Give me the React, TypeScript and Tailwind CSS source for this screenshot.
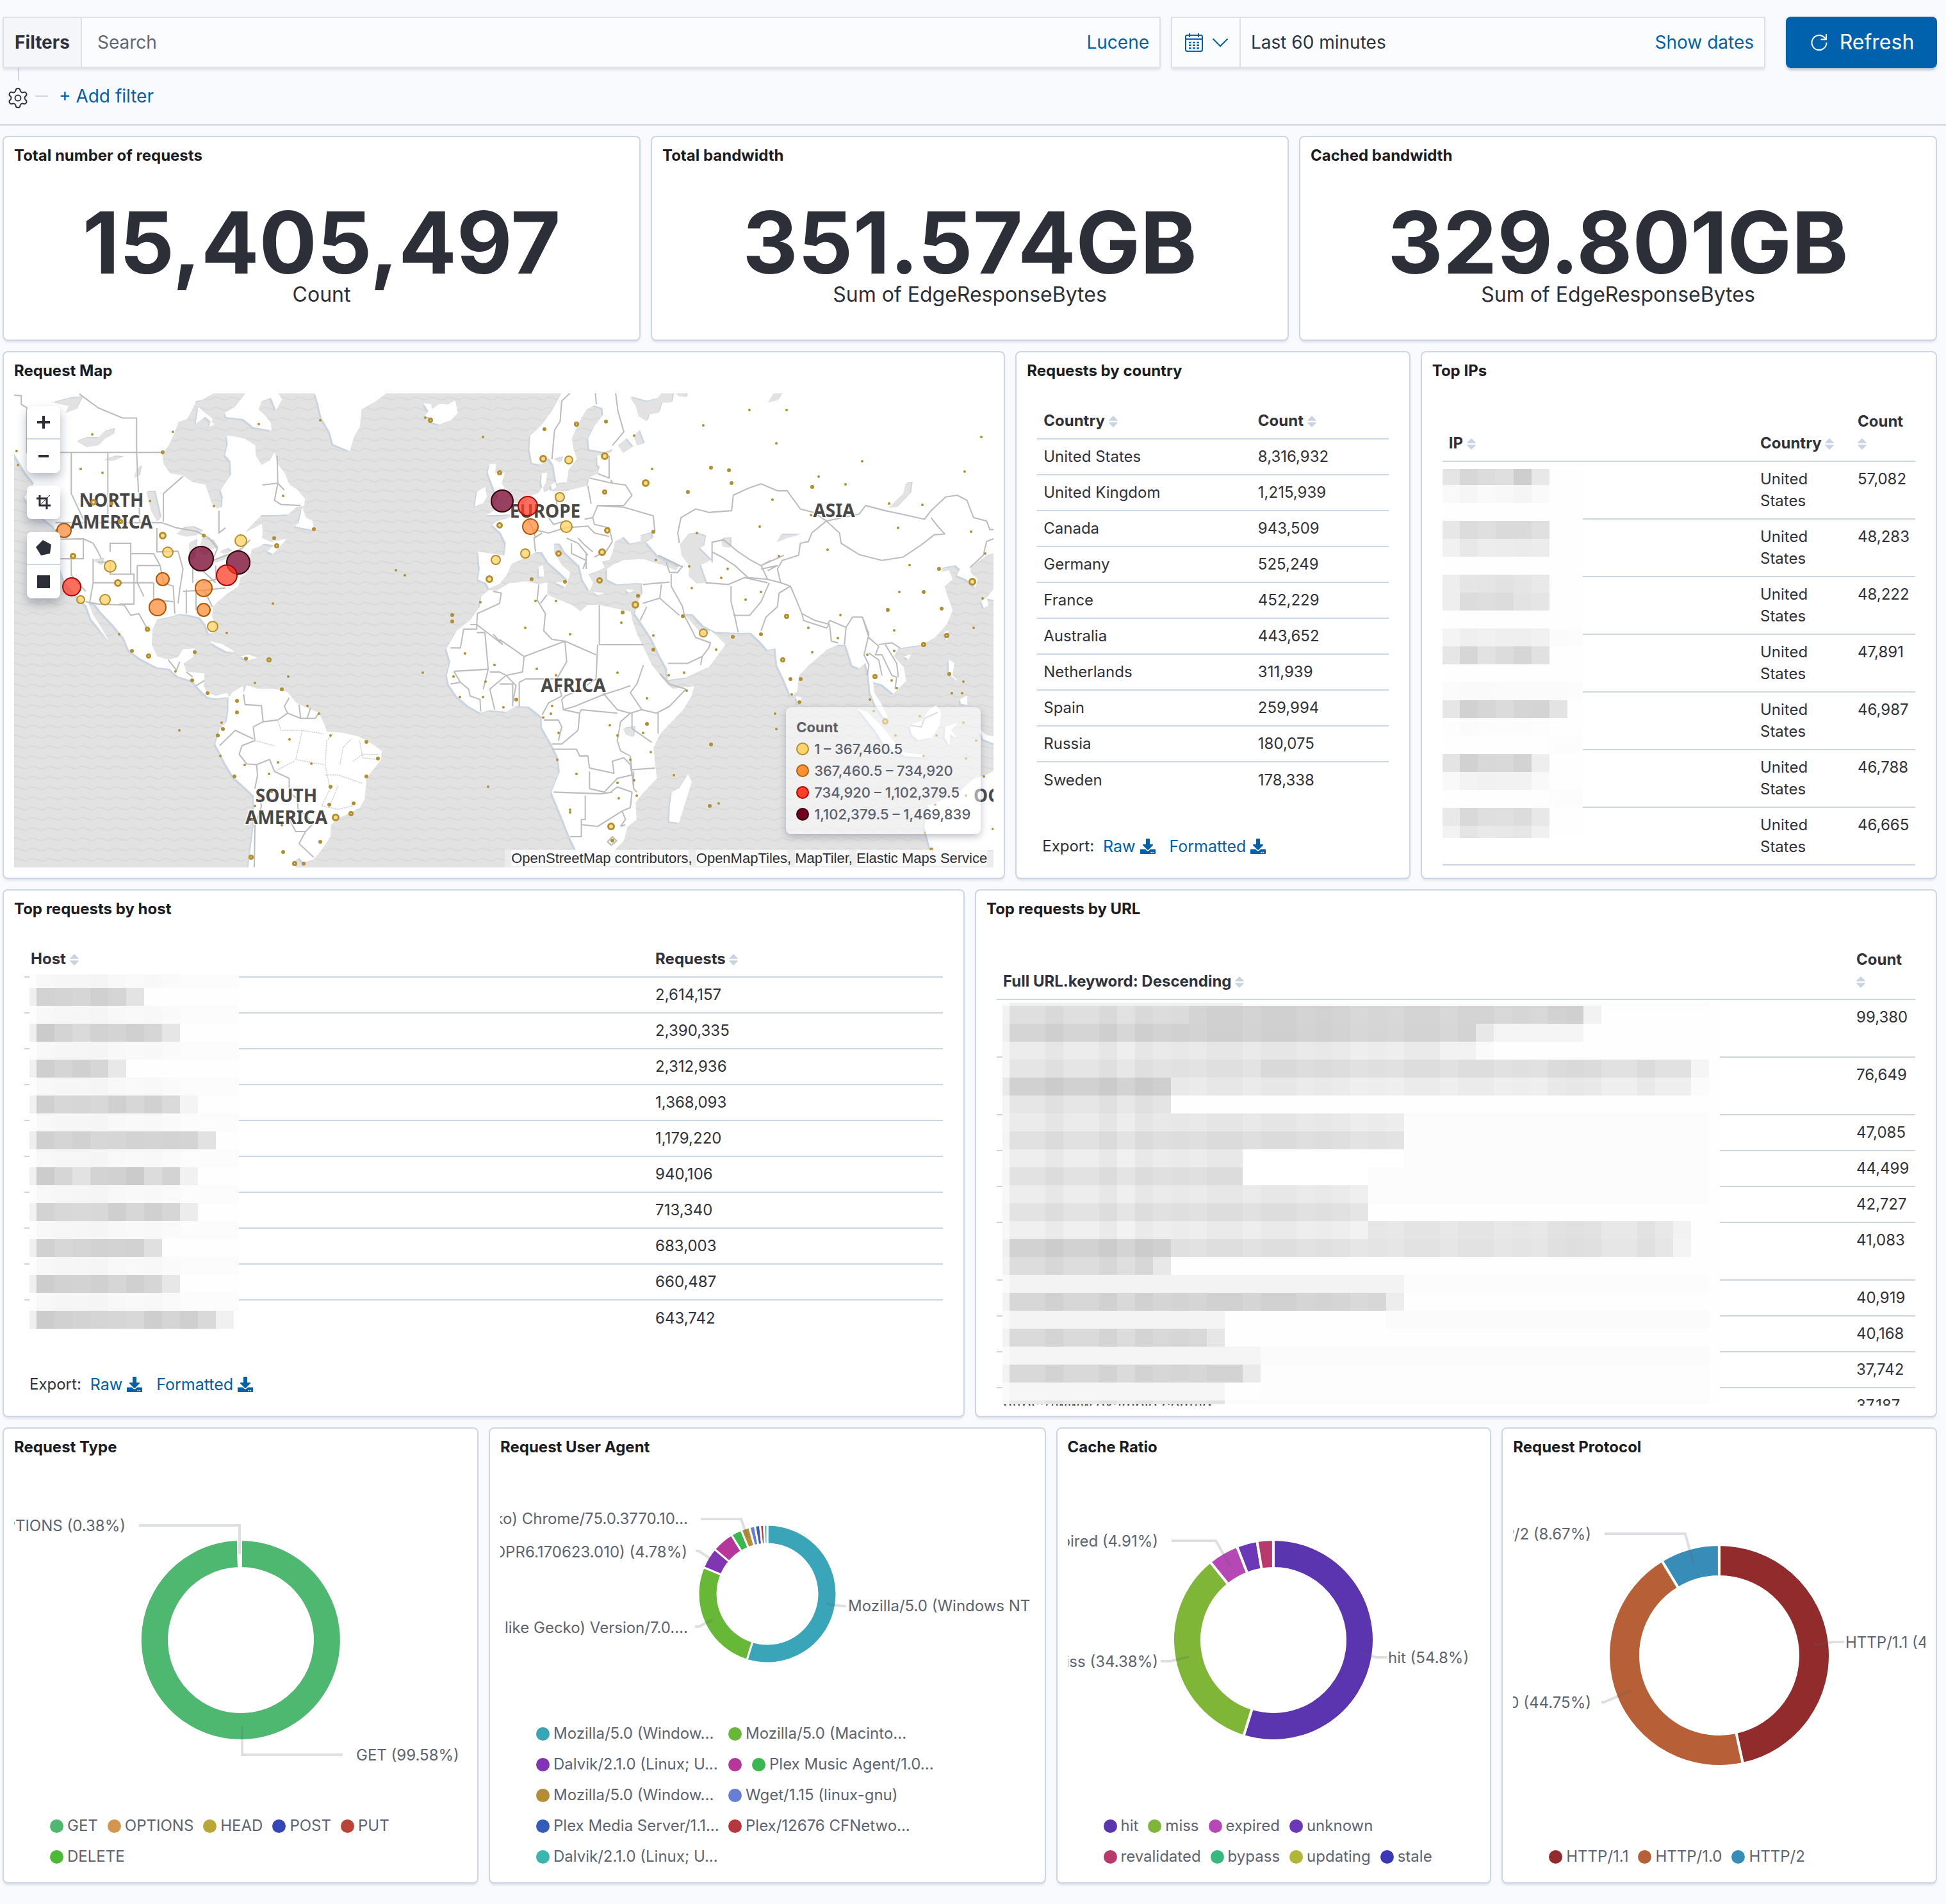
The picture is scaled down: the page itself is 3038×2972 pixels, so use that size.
import { type ReactNode } from "react";
import { Settings } from "lucide-react";
import { FaDownload } from "react-icons/fa";

/* ---------- Icons ---------- */

function CalendarIcon() {
  return (
    <svg width="32" height="32" viewBox="0 0 16 16" fill="none" stroke="currentColor" strokeWidth="1" aria-hidden>
      <rect x="1.5" y="2.5" width="13" height="12.5" rx="1.2" />
      <path d="M1.5 5.5h13M4.5 1v3M11.5 1v3" />
      <path d="M4 8.2h1.8M7.1 8.2h1.8M10.2 8.2H12M4 10.4h1.8M7.1 10.4h1.8M10.2 10.4H12M4 12.6h1.8M7.1 12.6h1.8M10.2 12.6H12" strokeWidth="1.2" />
    </svg>
  );
}

function ChevronIcon() {
  return (
    <svg width="26" height="16" viewBox="0 0 26 16" fill="none" stroke="currentColor" strokeWidth="2" strokeLinecap="round" aria-hidden>
      <path d="M2 3l11 11L24 3" />
    </svg>
  );
}

function RefreshIcon() {
  return (
    <svg width="32" height="32" viewBox="0 0 32 32" fill="none" stroke="currentColor" strokeWidth="2" aria-hidden>
      <path d="M27.500 16.500A11.500 11.500 0 1 1 24 8.300L26.500 11" />
      <path d="M27 3v8.500h-8.500" />
    </svg>
  );
}

function SortIcon() {
  return (
    <svg className="inline-block align-[-2px]" width="14" height="18" viewBox="0 0 14 18" fill="#cad3e4" aria-hidden>
      <path d="M7 0l6.500 6.500q.8 1.300-.7 1.300H1.200Q-.3 7.800.5 6.500zM7 18l6.500-6.500q.8-1.300-.7-1.300H1.200Q-.3 10.200.5 11.500z" />
    </svg>
  );
}

/* ---------- Shared blocks ---------- */

function Panel({ title, className, children }: { title: string; className: string; children: ReactNode }) {
  return (
    <section className={`flex min-w-0 flex-col rounded-lg border-2 border-[#cdd6e4] bg-white px-4 pb-4 shadow-[0_4px_4px_-2px_rgba(152,162,179,0.35)] ${className}`}>
      <h2 className="flex h-16 shrink-0 items-center pb-1.5 text-2xl font-bold text-[#1a1c21]">{title}</h2>
      {children}
    </section>
  );
}

function Metric({ value, label }: { value: string; label: string }) {
  return (
    <div className="flex flex-1 flex-col items-center justify-center pt-1 text-[#2d2f38]">
      <div className="text-[134px] leading-[124px] font-bold">{value}</div>
      <div className="text-[32px] leading-10">{label}</div>
    </div>
  );
}

function Th({ children, className }: { children: string; className?: string }) {
  return (
    <th scope="col" className={`px-2.5 py-2.5 text-left align-bottom font-bold ${className ?? ""}`}>
      <button type="button" className="block text-left">
        {children} <SortIcon />
      </button>
    </th>
  );
}

const rowLine = "border-b-2 border-[#ccd5e3]";

function Export() {
  return (
    <div className="mt-14 flex items-center gap-[22px] pl-2 leading-10">
      <div className="flex items-center gap-3.5">
        <span>Export:</span>
        <a href="#raw" className="flex items-center gap-[7px] text-[25px] text-[#0060ac]">
          Raw <FaDownload size={24} />
        </a>
      </div>
      <a href="#formatted" className="flex items-center gap-[7px] text-[25px] text-[#0060ac]">
        Formatted <FaDownload size={24} />
      </a>
    </div>
  );
}

/* Pixelated cover for private values. Each row is a list of grey levels, one per 28px cell. */
const CELL = 28;

function Mosaic({ rows, x, y, width, height, className }: { rows: number[][]; x: number; y: number; width: number; height: number; className: string }) {
  return (
    <svg className={`absolute ${className}`} width={width} height={height} viewBox={`${x} ${y} ${width} ${height}`} shapeRendering="crispEdges" aria-hidden>
      <rect x={x} y={y} width={width} height={height} fill="#fefefe" />
      {rows.map((row, r) =>
        row.map((g, c) => (
          <rect key={`${r}-${c}`} x={c * CELL} y={r * CELL} width={CELL} height={CELL} fill={`rgb(${g},${g},${Math.min(255, g + 1)})`} />
        )),
      )}
    </svg>
  );
}

const hexRow = (s: string) => (s ? s.split(" ").map((h) => parseInt(h, 16)) : []);

const ipMosaic = [
  "e5 d7 dc df ce e8", "f9 f6 fa f8 f5 fa", "", "e7 dc df da da e0", "f1 e8 ed ec eb ec", "",
  "ee e5 e4 e2 e5 e9", "ee dc de dc e3 e5", "", "f4 ef f1 ef ef f1 fb fc", "e6 d6 e2 dc d6 e1", "",
  "fb fa fa fb fb fb fb fc", "e6 d1 d6 db d5 d4 e3", "fd fb fc fc fc fd", "fe fe fe fe fe fe fc fc",
  "e4 d1 d8 d9 d3 ee", "f9 f3 f1 f2 f2 f9", "fe fe fe fe fe fe fc fc", "e9 d9 df e0 dc e8", "f2 e5 e9 e8 e6 f0",
].map(hexRow);

const faint = "fd f8 f6 f6 f5 f8 f9 f8 fa fc fc fc fc";
const hostMosaic = [
  "ef d2 d4 d6 d0 d5 e3",
  "ef cb d4 da d2 d4 d0 d6 e6",
  "f1 cf d5 d0 d6 e8",
  "f1 d0 d7 d6 d8 d0 d7 d1 da f4",
  "ee d0 d5 d1 d7 d6 d3 d4 d3 d4 e2",
  "f0 cc d6 e2 d3 d1 cb dc d3 f1",
  "f2 d3 d8 d9 d8 cf d7 d0 d6 ec",
  "ef d1 d7 d5 d2 d3 d2 e0",
  "ef cd d2 d3 d0 d6 d0 d6 e7",
  "ef cc d1 d3 d5 d6 d8 ce d5 cf d9 f0",
].flatMap((r) => [hexRow(faint), hexRow(r)]);

/* [cells, grey] runs for each line of covered URLs */
const urlRuns: [number, number][][] = [
  [[1, 250], [13, 240], [26, 251]],
  [[1, 242], [10, 221], [22, 212], [1, 242]],
  [[1, 240], [26, 211], [1, 232], [5, 245]],
  [[1, 246], [24, 234], [2, 242], [1, 250]],
  [[1, 246], [14, 227], [24, 221], [1, 245]],
  [[1, 238], [9, 207], [29, 235], [1, 251]],
  [[1, 245], [9, 228]],
  [[1, 246], [22, 233], [17, 252]],
  [[1, 245], [22, 223], [17, 252]],
  [[1, 248], [13, 236], [9, 255], [17, 252]],
  [[1, 246], [13, 224], [7, 255], [19, 252]],
  [[1, 248], [20, 235], [19, 252]],
  [[1, 246], [20, 225]],
  [[1, 248], [20, 238], [17, 228], [1, 242]],
  [[1, 240], [9, 208], [28, 226], [1, 244]],
  [[1, 243], [8, 219], [1, 232]],
  [[1, 250], [22, 243], [17, 252]],
  [[1, 243], [21, 213], [1, 233]],
  [[1, 250], [12, 244], [9, 254], [18, 251]],
  [[1, 243], [11, 216], [1, 234], [27, 254]],
  [[1, 250], [14, 245], [25, 251]],
  [[1, 243], [13, 215], [1, 234], [25, 253]],
  [[1, 250], [12, 246], [2, 254], [25, 253]],
  [[1, 245], [12, 232], [27, 252]],
];
const urlMosaic = urlRuns.map((runs, r) =>
  runs
    .flatMap(([n, g]) => Array.from({ length: n }, () => g))
    .map((g, i) => (g < 240 ? g + (((i * 7 + r * 5 + ((i * i) % 11)) % 5) - 2) * 2 : g)),
);

/* ---------- Map ---------- */

const westLand = [
  "M43,138L652,138 618,156 598,160 590,180 572,212 545,222 530,260 515,290 495,315 500,345 520,372 558,378 590,398 628,405 640,440 650,465 665,475 680,470 683,440 676,420 690,400 708,375 706,335 690,318 698,285 695,262 720,265 750,272 780,290 782,320 800,348 825,335 840,312 848,345 870,370 885,405 910,420 932,445 930,465 905,470 880,490 840,492 800,492 770,520 748,545 780,530 800,520 803,545 800,560 830,572 875,563 850,590 835,605 820,598 840,580 808,575 790,585 770,592 765,610 762,640 755,660 735,675 728,700 710,712 690,725 665,745 650,760 648,790 658,815 655,835 640,838 630,812 612,790 575,782 550,780 520,788 480,796 466,825 463,870 480,905 515,915 545,908 560,885 595,882 590,905 572,918 560,925 570,950 625,955 622,990 632,1010 660,1020 695,1012 700,1022 660,1026 636,1022 610,998 590,975 545,962 520,940 480,935 430,910 395,885 380,850 345,810 310,775 290,750 268,745 285,785 305,815 330,855 310,830 280,795 265,755 245,740 225,715 200,690 185,650 175,600 178,560 165,525 130,500 100,480 75,440 105,400 80,370 43,312Z",
  "M752,138L720,178 690,195 692,206 745,212 775,235 830,245 828,225 812,205 790,185 800,160 830,150 845,185 862,155 850,138Z",
  "M608,180L600,225 628,205 655,228 640,235 650,212 625,195Z",
  "M965,138L975,170 985,210 1010,250 1020,285 1070,305 1082,265 1100,235 1105,185 1150,160 1180,138Z",
  "M1298,168L1318,170 1322,185 1345,170 1370,172 1392,160 1400,195 1380,215 1345,228 1315,220 1325,208 1300,205 1312,190Z",
  "M905,525L915,515 925,472 935,500 955,510 960,535 930,530Z",
  "M645,862L680,870 715,890 695,890 665,875Z",
  "M738,905L760,900 785,908 760,916Z",
  "M700,1025L712,1010 742,992 745,1015 755,990 790,1000 840,1000 880,1010 905,1040 940,1055 975,1070 990,1100 1000,1125 1050,1128 1100,1140 1145,1165 1167,1180 1165,1205 1140,1235 1120,1260 1115,1320 1100,1345 1070,1360 1030,1378 1012,1395 1010,1430 985,1465 960,1495 930,1505 915,1490 900,1500 905,1525 760,1525 770,1450 778,1390 778,1310 750,1285 715,1255 690,1215 672,1180 660,1160 672,1120 695,1095 700,1060Z",
];

const westWater = [
  "M540,548L560,530 590,528 618,540 600,552 570,556Z",
  "M578,575L600,565 595,600 590,625 580,620Z",
  "M618,560L650,568 665,590 640,592 628,610 610,600Z",
  "M650,628L680,612 705,606 690,622 660,632Z",
  "M672,600L695,592 705,600 685,606Z",
  "M448,425L472,425 490,500 480,512 462,480Z",
  "M235,278L262,268 300,268 318,250 348,242 345,258 318,272 300,290 265,295Z",
  "M162,165L215,152 250,150 232,185 200,195 210,175Z",
  "M318,332L350,322 376,324 345,335Z",
  "M410,385L418,358 430,350 425,378Z",
  "M285,625L315,620 310,640Z",
];

const westBorders = [
  "M43,143L65,145 65,170 82,180 82,310H500",
  "M243,140L300,180 375,210H418V310M218,310V430L260,515M330,310V512M418,310L428,512",
  "M170,515H495L540,530 600,540 640,560 665,590 650,625 700,608 740,590 765,565",
  "M500,512V430L560,380M690,530L670,545V480M803,405L850,400 840,450 860,462 920,465M848,320L850,400 870,420",
  "M185,563L255,562V620H185M218,620V668L262,715M285,620V690L275,745M255,562L285,575 300,600 310,620M285,690H470M337,600V575H400V665M300,630H337V665H410V752H365M400,605H470L490,640H420M420,640V690L440,730M470,690V740L530,745M480,530V600L545,598M490,640L500,690 530,700 535,780M545,598L560,650 550,710 545,750M590,640V690M560,715L625,712 690,705M570,710V780M600,712V770M625,712L650,760M660,640V680L620,690M620,655L660,690",
  "M262,745L300,752 380,755 400,785 425,780 448,820 460,830",
  "M515,915L540,945 550,920M570,950L590,965M600,990L625,975",
  "M745,1015L750,1045 800,1048 805,1095 775,1110 780,1150 740,1165M672,1165L720,1120 775,1145M805,1095L850,1090 880,1070 870,1050 885,1025M880,1070L920,1085 915,1045M920,1085H965L975,1070M950,1055L940,1085",
  "M740,1165L732,1190 755,1218 785,1220 788,1250 780,1290M785,1220L825,1205 840,1240 885,1260 885,1300 910,1320 912,1350 940,1370 955,1395 935,1415 905,1415 880,1370",
  "M915,1450L935,1415M915,1450L960,1490M790,1300L800,1340 780,1400 778,1519",
];

const westFineBorders = [
  "M850,1090L860,1120 925,1120 905,1205 960,1215 995,1220 1000,1150 1020,1130M925,1120L990,1130M995,1250L1035,1250 1110,1275M1040,1220L1050,1170 1075,1145M1080,1210L1110,1190 1160,1190M995,1220L1010,1290 985,1340 1035,1350 1080,1340M1035,1280L1010,1340M840,1240L900,1210M1100,1150L1110,1200 1160,1205M780,1150L840,1165",
];

const eastLand = [
  "M190,138L160,190 130,230 95,262 92,300 100,340 125,345 150,325 165,345 175,400 205,395 210,360 235,330 225,300 220,270 240,225 265,185 290,172 315,180 318,200 290,235 272,270 275,300 320,308 350,298 340,312 300,320 300,345 308,352 300,372 275,385 270,408 240,415 200,425 165,425 150,420 135,428 128,400 130,372 145,370 140,400 118,430 90,440 75,465 50,490 20,505 -10,512 -20,522 5,545 20,575 15,612 -30,605 -65,600 -60,650 -65,680 -40,690 -32,706 0,692 22,665 35,635 75,618 110,600 130,600 150,630 180,655 208,680 205,692 215,660 190,640 165,600 165,575 185,575 200,600 245,640 255,680 275,712 285,690 270,665 300,655 320,645 312,628 335,622 345,600 352,570 380,555 400,575 430,568 430,550 470,540 470,560 450,572 485,610 550,640 540,655 500,640 440,622 380,625 345,640 330,650 330,680 360,694 410,690 436,690 438,720 422,750 415,780 430,800 465,850 490,900 513,940 515,972 570,965 640,935 690,870 660,842 645,830 622,845 590,810 562,780 590,780 625,815 660,832 720,835 770,835 800,862 820,885 845,880 850,930 870,970 892,1020 910,1005 915,960 945,930 1000,885 1035,870 1060,870 1080,930 1100,938 1120,922 1130,960 1135,1010 1152,1050 1175,1080 1188,1085 1170,1048 1145,1010 1142,978 1170,985 1205,1012 1215,1002 1243,975 1235,935 1205,905 1220,880 1290,870 1330,850 1368,810 1385,770 1370,730 1360,700 1385,680 1375,655 1350,660 1355,645 1395,638 1410,650 1400,668 1430,680 1455,702 1462,680 1440,660 1440,645 1490,610 1520,600 1520,138Z",
  "M-30,345L-12,345 -15,372 15,370 5,400 25,430 45,470 30,490 -5,492 -38,492 -5,475 -20,465 -5,440 -15,420 -25,395 -35,370Z",
  "M-68,425L-45,412 -40,440 -52,458 -75,466Z",
  "M158,405L170,398 172,412 160,418Z",
  "M120,645L132,640 135,670 122,672Z",
  "M175,690L205,688 200,702Z",
  "M290,718L318,720 300,725Z",
  "M388,710L410,712 395,718Z",
  "M-32,712L-10,715 30,692 80,687 120,695 145,690 145,725 180,740 220,755 248,775 270,755 300,755 350,765 400,775 405,800 420,840 440,880 465,930 490,960 510,985 530,1000 595,992 585,1022 560,1060 520,1100 490,1130 470,1170 475,1220 480,1260 440,1300 415,1330 418,1380 390,1400 380,1440 345,1475 235,1470 215,1430 190,1370 160,1300 185,1240 180,1200 160,1160 130,1110 130,1080 110,1065 90,1050 50,1048 20,1065 -30,1060 -58,1068 -95,1048 -130,1020 -155,985 -160,960 -150,920 -162,882 -130,830 -90,800 -60,760 -55,730Z",
  "M576,1250L587,1270 548,1388 520,1385 522,1340 528,1300 550,1290Z",
  "M1098,1058L1125,1068 1165,1105 1190,1135 1212,1160 1205,1180 1180,1165 1150,1120Z",
  "M1222,1182L1260,1188 1300,1192 1295,1198 1240,1194Z",
  "M1255,1105L1290,1095 1315,1060 1335,1048 1350,1068 1345,1105 1322,1140 1282,1148 1262,1132Z",
  "M1365,1110L1400,1100 1380,1118 1395,1140 1378,1130 1375,1160 1362,1140Z",
  "M1375,915L1390,925 1385,960 1400,975 1375,955Z",
  "M1410,1030L1430,1020 1430,1045 1412,1042Z",
  "M1362,835L1372,830 1368,855Z",
  "M1240,905L1258,900 1250,912Z",
  "M908,1022L922,1025 922,1042 912,1042Z",
  "M1475,745L1490,735 1495,755 1482,762Z",
  "M1490,735L1515,705 1520,740Z",
  "M1310,1340L1340,1330 1400,1305 1450,1262 1490,1250 1520,1235V1468H1320L1300,1400Z",
  "M1470,1120L1490,1135 1520,1140V1160L1480,1145Z",
];

const eastWater = [
  "M398,150L445,162 480,155 495,138 530,138 525,165 495,165 485,195 455,200 450,220 425,205 415,172Z",
  "M540,138H570V150L545,145Z",
  "M820,165L838,138H862L850,158Z",
  "M552,578L575,550 600,546 628,555 622,585 608,590 645,625 612,640 630,690 602,692 578,670 580,640 556,610Z",
  "M678,562L705,560 706,588 682,585Z",
  "M848,572L860,550 918,550 880,560Z",
  "M1260,398L1255,430 1215,470 1190,472 1235,430 1242,402Z",
  "M362,290L385,272 405,295 378,312Z",
  "M410,262L425,248 440,285 420,290Z",
  "M165,330L190,325 185,340Z",
  "M378,1115L412,1110 408,1140 385,1132Z",
];

const eastBorders = [
  "M215,138L190,160 185,220 168,245 160,330M293,138L296,170M355,138L362,190 380,250 345,290M335,320V385L300,372M275,385L345,400 385,405 405,435 380,465 300,465 285,500 260,505M270,408L280,460M340,390L345,400M300,465L380,470 470,495 475,540M285,500L290,520 335,530 345,570M105,535L150,545 200,530 270,525 290,545M130,545L105,560 110,600M205,560L240,575 270,610M240,560L260,580 285,600M220,575V605L265,625 255,650M265,605V650M320,600L290,615M85,500L100,530 110,560M170,430L180,490 150,500 165,520 200,510M60,485L85,500M345,570L325,600M290,545L335,555",
  "M550,575L545,545 555,500 600,475 640,485 710,480 715,435 760,415 800,402 850,422 880,422 920,475 960,485M960,485L1000,510M1000,510L955,545 945,570 920,575 915,610 865,625 850,650 860,690M860,690L820,680 800,640 830,625M650,630V572L685,565 730,600 770,625 800,640M650,600L680,615 720,640 760,675 820,680M800,640L870,610M820,655L850,640 800,650",
  "M1000,510L1100,490 1120,465 1180,480 1230,490 1300,505 1320,480 1365,440 1400,435 1430,450 1450,500 1490,510 1500,535H1515M1000,510L1040,545 1045,575 1100,608 1170,625 1235,615 1290,580 1330,550 1362,548 1340,525 1320,500",
  "M1440,645L1480,610 1490,570 1515,560M485,610L530,630 560,645M510,630L520,660 545,660 560,640M525,665V700L560,760 565,785M438,695L520,688M438,750L490,735 495,695M490,735L550,785M430,800L450,760M630,690L700,695 750,675 820,690M708,700V745L720,790 730,835M715,785H765L800,745 825,690M800,830L815,790 850,760 855,720 890,700M860,690L890,700 910,745 925,780M925,780L965,800 1005,810 1010,800 1060,820 1080,790 1110,790 1130,840M925,780L930,800 1000,822 1010,810M1010,815L1015,860 1035,865M1060,820L1055,870M1130,840L1115,900 1130,930 1125,960M1110,790L1130,850 1160,875 1150,900 1170,900 1200,960 1215,965 1210,1000M1160,870L1200,865 1225,880M1180,870L1215,925 1220,965M1130,895L1160,915 1170,960M515,925L575,925 620,905M640,880L620,905 615,930M565,785L600,850 645,865 640,880",
  "M-90,812H-70L-68,780 0,750 5,720 -20,715M-150,880H-120L-110,825H-70V812L10,870M-45,835H-70M-45,835L-35,942 -140,948M-20,840L10,870M0,855L75,905 200,860M120,695L115,740 140,780 135,830 160,855M145,725L125,750M305,755V870H440M300,870L295,970 250,1000 200,1020 190,1030M160,855L200,860 295,900M75,905L70,950 20,960M200,860L205,920 175,970 80,970 60,980V1050M20,960L-30,1000 -15,1060M20,960L50,990 40,1040M-35,942L-50,1000M-140,948L-120,980 -150,985M-120,980L-95,1000 -90,1020 -60,1030 -58,1065M-30,950L0,950 20,960M0,985H40V1050M175,970L190,1020 150,1040 130,1075M190,1030L195,1060 230,1050 320,1015 360,1060M295,970L320,1015 370,1000 400,990M440,930L420,985 400,1010 435,1060 480,1070 520,1050 570,1000 520,985 490,955M360,1060L400,1070 435,1060M400,1070L370,1095 360,1150 370,1180 400,1195M405,1115L465,1155M485,1070V1130M405,1070V1115M195,1060L245,1070 250,1060 360,1070M245,1070L240,1120 190,1160H160M135,1090H180L190,1110 180,1150M160,1175H235L245,1195H270L275,1230M275,1230L350,1245 345,1210 380,1200 400,1220 405,1250 360,1260 320,1300 275,1290V1240M165,1300L310,1305 345,1300M262,1310V1380H250V1430H215M250,1395L300,1400 375,1355M340,1300L360,1285 405,1300 400,1345 375,1355 385,1380 370,1400M410,1240V1290L420,1300M400,1235L475,1230M400,1195L410,1290M330,1445L345,1430 358,1442 342,1455ZM370,1400L385,1395",
  "M1255,1105L1290,1110 1300,1085 1340,1068",
];

type Half = "W" | "E";
const place = (half: Half, x: number, y: number): [number, number] => [
  Math.round(x * 0.5102 + (half === "W" ? -22 : 758)),
  Math.round(y * 0.5357 - 74),
];

/* Small buckets: [x, y, radius] */
const westDots: number[][] = [
  [51, 306, 2], [55, 347, 2], [282, 257, 2], [529, 250, 2], [498, 310, 3], [247, 358, 2], [314, 370, 2], [792, 228, 2], [980, 216, 2], [1301, 209, 2], [1317, 216, 4],
  [1478, 265, 2], [286, 455, 5], [341, 460, 3], [459, 452, 2], [368, 511, 4], [655, 467, 2], [866, 437, 2], [960, 534, 3], [839, 560, 3], [847, 583, 4], [623, 552, 3],
  [498, 552, 6], [513, 601, 9], [737, 567, 10], [337, 642, 10], [361, 690, 6], [321, 739, 9], [247, 739, 7], [223, 612, 5], [172, 538, 2], [651, 817, 9], [694, 836, 2],
  [451, 825, 4], [365, 840, 2], [404, 888, 3], [455, 903, 4], [596, 892, 3], [537, 948, 2], [588, 974, 3], [635, 1011, 3], [753, 911, 3], [823, 914, 4], [882, 963, 2],
  [780, 982, 2], [862, 1000, 3], [725, 1034, 3], [725, 1067, 3], [941, 1049, 2], [976, 1071, 2], [678, 1097, 2], [682, 1116, 3], [666, 1135, 3], [549, 1120, 2], [674, 1195, 2],
  [717, 1254, 3], [749, 1221, 2], [823, 1247, 2], [851, 1213, 2], [886, 1146, 2], [953, 1217, 2], [1011, 1135, 2], [1121, 1153, 3], [1156, 1202, 3], [1121, 1254, 3],
  [1011, 1284, 3], [1008, 1336, 3], [1082, 1332, 3], [1074, 1362, 4], [1027, 1374, 6], [831, 1299, 2], [780, 1340, 2], [772, 1381, 2], [862, 1396, 2], [980, 1444, 3],
  [866, 1474, 3], [768, 1489, 4], [901, 1508, 4], [929, 1508, 3], [835, 750, 2], [1211, 653, 2], [1239, 668, 2], [1384, 784, 3], [1384, 802, 3], [1294, 952, 2],
  [1494, 1284, 2], [1529, 370, 4], [1529, 522, 5], [1517, 623, 8], [1497, 679, 6], [1470, 747, 2], [1423, 896, 2], [1388, 963, 2], [1407, 1023, 2], [1478, 1023, 2],
  [1486, 978, 2], [1513, 929, 2], [1541, 1053, 2],
];

const eastDots: number[][] = [
  [137, 242, 3], [235, 227, 4], [325, 220, 3], [412, 261, 2], [133, 328, 6], [211, 332, 7], [321, 321, 6], [321, 426, 4], [184, 440, 8], [204, 526, 10], [78, 605, 8],
  [180, 605, 5], [314, 601, 6], [329, 537, 5], [306, 683, 5], [98, 680, 3], [200, 687, 3], [110, 743, 2], [172, 743, 2], [467, 358, 2], [447, 399, 6], [576, 426, 3],
  [647, 354, 3], [702, 362, 3], [710, 399, 3], [623, 231, 2], [764, 187, 2], [878, 187, 2], [847, 284, 2], [956, 410, 3], [976, 381, 2], [1058, 403, 2], [1109, 336, 2],
  [835, 448, 2], [796, 526, 2], [604, 545, 2], [470, 541, 3], [478, 623, 2], [580, 642, 2], [588, 705, 2], [678, 676, 2], [698, 650, 2], [855, 612, 2], [952, 493, 2],
  [1003, 593, 2], [1192, 459, 2], [1219, 530, 2], [1294, 463, 2], [1254, 638, 2], [1345, 650, 3], [1423, 366, 2], [1474, 265, 2], [1443, 541, 2], [1486, 605, 2],
  [1446, 687, 6], [1478, 736, 2], [1450, 821, 2], [1298, 717, 3], [1223, 717, 2], [1188, 769, 3], [1352, 765, 3], [1368, 844, 4], [1298, 870, 4], [1207, 829, 2],
  [1207, 888, 2], [1043, 784, 2], [1035, 851, 2], [1125, 900, 2], [1149, 963, 4], [1200, 974, 2], [1215, 997, 2], [1133, 1030, 2], [1376, 956, 3], [1419, 978, 2],
  [1384, 1011, 2], [1415, 1011, 2], [423, 728, 3], [416, 754, 6], [376, 776, 3], [372, 806, 2], [470, 844, 2], [470, 885, 3], [561, 788, 3], [623, 836, 7], [713, 847, 3],
  [662, 885, 2], [753, 739, 2], [800, 717, 2], [878, 788, 4], [800, 840, 3], [945, 821, 2], [956, 892, 2], [866, 914, 4], [890, 970, 3], [921, 970, 3], [894, 1015, 2],
  [917, 1037, 3], [843, 1071, 2], [847, 1116, 2], [78, 821, 2], [216, 840, 2], [114, 941, 2], [172, 960, 2], [361, 952, 2], [517, 960, 2], [565, 952, 2], [572, 1004, 2],
  [451, 1027, 2], [451, 1101, 3], [439, 1127, 2], [463, 1183, 2], [51, 1030, 3], [161, 1049, 2], [157, 1071, 2], [133, 1082, 2], [180, 1127, 2], [337, 1105, 2],
  [361, 1135, 2], [176, 1206, 2], [235, 1247, 2], [400, 1206, 2], [412, 1266, 2], [361, 1273, 2], [365, 1318, 2], [419, 1310, 2], [216, 1351, 2], [216, 1359, 2],
  [341, 1400, 6], [345, 1441, 3], [533, 1251, 2], [647, 1161, 3], [643, 1340, 3], [670, 1333, 2], [1145, 1064, 2], [1180, 1094, 5], [1211, 1135, 2], [1286, 1079, 2],
  [1337, 1135, 2], [1419, 1097, 2], [1458, 1150, 2], [1298, 1194, 2], [1427, 1202, 2], [1482, 1254, 2], [1427, 1310, 2], [1333, 1336, 2], [1509, 1407, 2], [1301, 1419, 2], [1321, 1467, 3],
];

const bigDots: { half: Half; x: number; y: number; r: number; tier: "orange" | "red" | "wine" }[] = [
  { half: "W", x: 196, y: 538, r: 11, tier: "orange" },
  { half: "W", x: 498, y: 679, r: 10, tier: "orange" },
  { half: "W", x: 623, y: 705, r: 13, tier: "orange" },
  { half: "W", x: 623, y: 769, r: 10, tier: "orange" },
  { half: "W", x: 482, y: 761, r: 13, tier: "orange" },
  { half: "W", x: 219, y: 702, r: 14, tier: "red" },
  { half: "W", x: 616, y: 620, r: 19, tier: "wine" },
  { half: "W", x: 729, y: 631, r: 18, tier: "wine" },
  { half: "W", x: 694, y: 668, r: 16, tier: "red" },
  { half: "E", x: 7, y: 451, r: 17, tier: "wine" },
  { half: "E", x: 86, y: 467, r: 15, tier: "red" },
  { half: "E", x: 94, y: 526, r: 12, tier: "orange" },
];

const tiers = {
  orange: { fill: "#fd8d3c", stroke: "#b25400" },
  red: { fill: "#fc3f25", stroke: "#b00000" },
  wine: { fill: "#75002a", stroke: "#350008" },
};

function Landmass({ land, water, borders, fine, transform }: { land: string[]; water: string[]; borders: string[]; fine?: string[]; transform: string }) {
  return (
    <g transform={transform} strokeLinejoin="round">
      <g fill="#cbd5e1" transform="translate(-6 5)">
        {land.map((d) => (
          <path key={d} d={d} />
        ))}
      </g>
      <g fill="#fff" stroke="#fff" strokeWidth="2">
        {land.map((d) => (
          <path key={d} d={d} />
        ))}
      </g>
      <g fill="#cbd5e1" transform="translate(4 -3)">
        {water.map((d) => (
          <path key={d} d={d} />
        ))}
      </g>
      <g fill="#e2e2e2">
        {water.map((d) => (
          <path key={d} d={d} />
        ))}
      </g>
      <g fill="none" stroke="#bdbdbd" strokeWidth="4">
        {borders.map((d) => (
          <path key={d} d={d} />
        ))}
      </g>
      <g fill="none" stroke="#d4d4d4" strokeWidth="3" strokeDasharray="5 2">
        {fine?.map((d) => (
          <path key={d} d={d} />
        ))}
      </g>
    </g>
  );
}

function MapDots({ half, dots }: { half: Half; dots: number[][] }) {
  return (
    <>
      {dots.map(([x, y, r]) => {
        const [cx, cy] = place(half, x, y);
        return r < 4 ? (
          <circle key={`${x}-${y}`} cx={cx} cy={cy} r={r} fill="#b28f2c" />
        ) : (
          <circle key={`${x}-${y}`} cx={cx} cy={cy} r={r < 7 ? r - 1.5 : r - 1} fill="#fed36c" fillOpacity="0.8" stroke="#b28f2c" strokeWidth={r < 7 ? 3 : 2} />
        );
      })}
    </>
  );
}

function MapButton({ label, children }: { label: string; children: ReactNode }) {
  return (
    <button type="button" aria-label={label} className="flex h-[52px] w-[52px] items-center justify-center bg-white text-[#2d2f38]">
      {children}
    </button>
  );
}

function MapButtons({ children }: { children: ReactNode }) {
  return <div className="flex flex-col divide-y-2 divide-[#cdd6e4] overflow-hidden rounded-lg shadow-[0_8px_16px_rgba(90,100,120,0.45)]">{children}</div>;
}

const legendRows = [
  { label: "1 – 367,460.5", dot: "bg-[#fed36c] border-[#b28f2c]" },
  { label: "367,460.5 – 734,920", dot: "bg-[#fd9133] border-[#b25e0a]" },
  { label: "734,920 – 1,102,379.5", dot: "bg-[#fc4125] border-[#b00000]" },
  { label: "1,102,379.5 – 1,469,839", dot: "bg-[#720022] border-[#350008]" },
];

function RequestMap() {
  return (
    <div className="relative min-h-[740px] flex-1 overflow-hidden">
      <svg className="absolute inset-0 size-full" viewBox="0 0 1530 740" preserveAspectRatio="xMinYMin slice" role="img" aria-label="World map of request counts">
        <defs>
          <pattern id="waves" width="26" height="16" patternUnits="userSpaceOnUse">
            <rect width="26" height="16" fill="#e2e2e2" />
            <path d="M0 6Q6.500 6 13 9T26 6" fill="none" stroke="#dadada" strokeWidth="2" />
          </pattern>
        </defs>
        <rect width="1530" height="740" fill="url(#waves)" />
        <Landmass land={westLand} water={westWater} borders={westBorders} fine={westFineBorders} transform="translate(-22 -74) scale(0.5102 0.5357)" />
        <Landmass land={eastLand} water={eastWater} borders={eastBorders} transform="translate(758 -74) scale(0.5102 0.5357)" />
        <g fontFamily="'Noto Sans', sans-serif" fontWeight="700" fontSize="28" fill="#484848" stroke="#fff" strokeOpacity="0.7" strokeWidth="4" paintOrder="stroke" textAnchor="middle">
          <text x="152" y="177">NORTH</text>
          <text x="152" y="211">AMERICA</text>
          <text x="829" y="194">EUROPE</text>
          <text x="1280" y="193">ASIA</text>
          <text x="873" y="466">AFRICA</text>
          <text x="425" y="638">SOUTH</text>
          <text x="425" y="672">AMERICA</text>
          <text x="1498" y="638" textAnchor="start">OCEANIA</text>
        </g>
        <MapDots half="W" dots={westDots} />
        <MapDots half="E" dots={eastDots} />
        {bigDots.map(({ half, x, y, r, tier }) => {
          const [cx, cy] = place(half, x, y);
          return <circle key={`${x}-${y}`} cx={cx} cy={cy} r={r} fill={tiers[tier].fill} fillOpacity="0.75" stroke={tiers[tier].stroke} strokeWidth="2" />;
        })}
      </svg>

      <div className="absolute top-5 left-5 flex flex-col gap-5">
        <MapButtons>
          <MapButton label="Zoom in">
            <svg width="20" height="20" viewBox="0 0 20 20" stroke="currentColor" strokeWidth="4" aria-hidden><path d="M0 10h20M10 0v20" /></svg>
          </MapButton>
          <MapButton label="Zoom out">
            <svg width="16" height="4" viewBox="0 0 16 4" aria-hidden><path d="M0 0h16v4H0z" fill="currentColor" /></svg>
          </MapButton>
        </MapButtons>
        <MapButtons>
          <MapButton label="Fit data bounds">
            <svg width="24" height="24" viewBox="0 0 24 24" fill="none" stroke="currentColor" strokeWidth="3" aria-hidden>
              <path d="M6 1v16h17M1 6h16v17" />
              <path d="M7 16L22 1" strokeWidth="1" />
            </svg>
          </MapButton>
        </MapButtons>
        <MapButtons>
          <MapButton label="Draw polygon">
            <svg width="24" height="24" viewBox="0 0 24 24" fill="currentColor" aria-hidden><path d="M11 0l13 7-2 14-14 3L0 11z" /></svg>
          </MapButton>
          <MapButton label="Draw rectangle">
            <svg width="20" height="20" viewBox="0 0 20 20" fill="currentColor" aria-hidden><path d="M0 0h20v20H0z" /></svg>
          </MapButton>
        </MapButtons>
      </div>

      <div className="absolute right-5 bottom-[52px] rounded-lg bg-white/50 px-4 py-3.5 text-[22px] leading-[34px] font-medium text-[#5a606b] shadow-[0_4px_12px_rgba(90,100,120,0.4)]">
        <div className="font-bold">Count</div>
        <ul>
          {legendRows.map((row) => (
            <li key={row.label} className="flex items-center gap-2">
              <span className={`size-5 rounded-full border-2 ${row.dot}`} />
              {row.label}
            </li>
          ))}
        </ul>
      </div>

      <div className="absolute right-0 bottom-0 bg-white/40 px-2.5 font-['Liberation_Sans',sans-serif] text-[22px] leading-7 text-[#2d2f38]">
        <a href="#osm" className="bg-white/70">OpenStreetMap contributors</a>, <a href="#omt" className="bg-white/70">OpenMapTiles</a>, <a href="#maptiler" className="bg-white/70">MapTiler</a>,{" "}
        <a href="#ems" className="bg-white/70">Elastic Maps Service</a>
      </div>
    </div>
  );
}

/* ---------- Donut charts ---------- */

type Slice = [share: number, color: string];
type Callout = { text: string; x: number; y: number; end?: boolean; line: string };

function slicePath(from: number, to: number, outer: number, inner: number) {
  const at = (share: number, r: number) => {
    const a = share * 2 * Math.PI;
    return `${(Math.sin(a) * r).toFixed(2)} ${(-Math.cos(a) * r).toFixed(2)}`;
  };
  const large = to - from > 0.5 ? 1 : 0;
  return `M${at(from, outer)}A${outer} ${outer} 0 ${large} 1 ${at(to, outer)}L${at(to, inner)}A${inner} ${inner} 0 ${large} 0 ${at(from, inner)}Z`;
}

function Donut({ label, slices, callouts, outer, inner, gap = 4 }: { label: string; slices: Slice[]; callouts: Callout[]; outer: number; inner: number; gap?: number }) {
  let sum = 0;
  return (
    <div className="flex flex-1 items-center justify-center overflow-hidden">
      <svg className="shrink-0 overflow-visible" width="900" height="380" viewBox="-450 -190 900 380" role="img" aria-label={label}>
        {slices.map(([share, color], i) => {
          const from = sum;
          sum += share / 100;
          return <path key={i} d={slicePath(from, Math.min(sum, 0.9999), outer, inner)} fill={color} stroke="#fff" strokeWidth={gap} />;
        })}
        {callouts.map((c) => (
          <g key={c.text}>
            <path d={c.line} fill="none" stroke="#5a606b" strokeOpacity="0.2" strokeWidth="4" />
            <text x={c.x} y={c.y + 9} textAnchor={c.end ? "end" : "start"} fontSize="24" fill="#5c6371">{c.text}</text>
          </g>
        ))}
      </svg>
    </div>
  );
}

function LegendItem({ color, label }: { color: string; label?: string }) {
  return (
    <li className="flex h-12 items-center gap-1.5">
      <span className="size-[21px] rounded-full" style={{ backgroundColor: color }} />
      {label && <span>{label}</span>}
    </li>
  );
}

function Legend({ items }: { items: [string, string][] }) {
  return (
    <ul className="flex flex-wrap gap-x-[15px] px-14 text-[#5c6371]">
      {items.map(([label, color]) => (
        <LegendItem key={label} label={label} color={color} />
      ))}
    </ul>
  );
}

const agentLegend: [string | undefined, string][][] = [
  [["Mozilla/5.0 (Window...", "#3aa5b8"]],
  [["Mozilla/5.0 (Macinto...", "#67b836"]],
  [["Dalvik/2.1.0 (Linux; U...", "#8135b5"]],
  [[undefined, "#b6379b"], ["Plex Music Agent/1.0...", "#38b84f"]],
  [["Mozilla/5.0 (Window...", "#b58d36"]],
  [["Wget/1.15 (linux-gnu)", "#667fd4"]],
  [["Plex Media Server/1.1...", "#355cb8"]],
  [["Plex/12676 CFNetwo...", "#b8373d"]],
  [["Dalvik/2.1.0 (Linux; U...", "#39b6ae"]],
];

/* ---------- Data ---------- */

const countries = [
  ["United States", "8,316,932"], ["United Kingdom", "1,215,939"], ["Canada", "943,509"], ["Germany", "525,249"], ["France", "452,229"],
  ["Australia", "443,652"], ["Netherlands", "311,939"], ["Spain", "259,994"], ["Russia", "180,075"], ["Sweden", "178,338"],
];
const ipCounts = ["57,082", "48,283", "48,222", "47,891", "46,987", "46,788", "46,665"];
const hostCounts = ["2,614,157", "2,390,335", "2,312,936", "1,368,093", "1,179,220", "940,106", "713,340", "683,003", "660,487", "643,742"];
const urlCounts: [string, boolean][] = [
  ["99,380", true], ["76,649", true], ["47,085", false], ["44,499", false], ["42,727", false],
  ["41,083", true], ["40,919", false], ["40,168", false], ["37,742", false], ["37,187", false],
];

/* ---------- Page ---------- */

export default function App() {
  return (
    <main className="min-h-screen bg-[#f9fafe] font-['Inter',sans-serif] text-2xl leading-[34px] text-[#2f313b]">
      <header className="border-b-2 border-[#cdd6e4] pt-[26px] pr-3.5 pb-5 pl-1 text-[28px]">
        <form className="flex h-20" onSubmit={(e) => e.preventDefault()}>
          <div className="flex min-w-0 flex-1 border-2 border-[#dfe1e4] bg-[#fbfcfe] shadow-[0_4px_4px_-1px_rgba(152,162,179,0.3)]">
            <button type="button" className="w-[122px] border-r-2 border-[#dfe1e4] bg-[#f5f6fa] font-bold">Filters</button>
            <input type="text" aria-label="Search" placeholder="Search" className="min-w-0 flex-1 bg-transparent px-6 outline-none placeholder:text-[#5f6775]" />
            <button type="button" className="px-4 text-[#0060ac]">Lucene</button>
          </div>
          <div className="ml-4 flex w-[928px] border-2 border-[#dfe1e4] bg-[#fbfcfe] shadow-[0_4px_4px_-1px_rgba(152,162,179,0.3)]">
            <button type="button" aria-label="Quick date select" className="flex w-[107px] items-center justify-center gap-3 border-r-2 border-[#dfe1e4] text-[#0060ac]">
              <CalendarIcon />
              <ChevronIcon />
            </button>
            <button type="button" className="flex flex-1 items-center justify-between px-4">
              <span>Last 60 minutes</span>
              <span className="text-[#0060ac]">Show dates</span>
            </button>
          </div>
          <button type="submit" className="ml-8 flex w-[236px] items-center justify-center gap-4 rounded-lg bg-[#0061ad] text-[32px] text-white shadow-[0_4px_4px_-1px_rgba(54,97,126,0.4)]">
            <RefreshIcon />
            Refresh
          </button>
        </form>
        <div className="ml-6 h-5 w-0.5 bg-[#cdd6e4]" />
        <div className="flex h-12 items-center pl-1.5">
          <button type="button" aria-label="Change all filters" className="mt-1.5">
            <Settings size={36} strokeWidth={1.3} />
          </button>
          <span className="mx-[9px] h-0.5 w-5 bg-[#ccd7e5]" />
          <button type="button" className="ml-2 text-[#0060ac]">+ Add filter</button>
        </div>
      </header>

      <div className="grid grid-cols-[repeat(48,minmax(0,1fr))] gap-4 pt-4 pr-3.5 pb-8 pl-1">
        <Panel title="Total number of requests" className="col-span-16 min-h-80">
          <Metric value="15,405,497" label="Count" />
        </Panel>
        <Panel title="Total bandwidth" className="col-span-16 min-h-80">
          <Metric value="351.574GB" label="Sum of EdgeResponseBytes" />
        </Panel>
        <Panel title="Cached bandwidth" className="col-span-16 min-h-80">
          <Metric value="329.801GB" label="Sum of EdgeResponseBytes" />
        </Panel>

        <Panel title="Request Map" className="col-span-25">
          <RequestMap />
        </Panel>

        <Panel title="Requests by country" className="col-span-10">
          <div className="p-4 pb-0">
            <table className="w-full table-fixed border-collapse">
              <thead>
                <tr className={rowLine}>
                  <Th className="w-[61%]">Country</Th>
                  <Th>Count</Th>
                </tr>
              </thead>
              <tbody>
                {countries.map(([name, count]) => (
                  <tr key={name} className={`h-14 last:border-b-0 ${rowLine}`}>
                    <td className="px-2.5">{name}</td>
                    <td className="px-2.5">{count}</td>
                  </tr>
                ))}
              </tbody>
            </table>
            <Export />
          </div>
        </Panel>

        <Panel title="Top IPs" className="col-span-13">
          <div className="relative mx-4 mt-4">
            <table className="w-full table-fixed border-collapse">
              <thead>
                <tr className={`h-[90px] ${rowLine}`}>
                  <Th>IP</Th>
                  <Th className="w-[152px]">Country</Th>
                  <Th className="w-[100px]">Count</Th>
                </tr>
              </thead>
              <tbody>
                {ipCounts.map((count) => (
                  <tr key={count} className={`h-[90px] align-top ${rowLine}`}>
                    <td />
                    <td className="px-2.5 py-2.5">United States</td>
                    <td className="px-2.5 py-2.5">{count}</td>
                  </tr>
                ))}
              </tbody>
            </table>
            <Mosaic rows={ipMosaic} x={1} y={3} width={219} height={576} className="top-[102px] left-0" />
          </div>
        </Panel>

        <Panel title="Top requests by host" className="col-span-24 h-[824px]">
          <div className="p-4 pb-0">
            <div className="relative">
              <table className="w-full table-fixed border-collapse">
                <thead>
                  <tr className={rowLine}>
                    <Th className="w-[68%]">Host</Th>
                    <Th>Requests</Th>
                  </tr>
                </thead>
                <tbody>
                  {hostCounts.map((count) => (
                    <tr key={count} className={`h-14 last:border-b-0 ${rowLine}`}>
                      <td />
                      <td className="px-2.5">{count}</td>
                    </tr>
                  ))}
                </tbody>
              </table>
              <Mosaic rows={hostMosaic} x={17} y={7} width={327} height={555} className="top-[51px] left-2" />
            </div>
            <Export />
          </div>
        </Panel>

        <Panel title="Top requests by URL" className="col-span-24 h-[824px]">
          <div className="min-h-0 flex-1 overflow-hidden px-4 pt-4">
            <div className="relative">
              <table className="w-full table-fixed border-collapse">
                <thead>
                  <tr className={`h-[90px] ${rowLine}`}>
                    <Th>Full URL.keyword: Descending</Th>
                    <Th className="w-[102px]">Count</Th>
                  </tr>
                </thead>
                <tbody>
                  {urlCounts.map(([count, tall], i) => (
                    <tr key={count} className={`align-top ${tall ? "h-[90px]" : "h-14"} ${rowLine}`}>
                      <td className="px-2.5 py-2.5">{i === urlCounts.length - 1 && "https://www.example.com/id"}</td>
                      <td className="px-2.5 py-2.5">{count}</td>
                    </tr>
                  ))}
                </tbody>
              </table>
              <Mosaic rows={urlMosaic} x={17} y={23} width={1120} height={627} className="top-[95px] left-[9px]" />
            </div>
          </div>
        </Panel>

        <Panel title="Request Type" className="col-span-12 h-[712px]">
          <Donut
            label="Request type share"
            outer={157}
            inner={112}
            slices={[[99.58, "#4eb871"], [0.42, "#d4954f"]]}
            callouts={[
              { text: "OPTIONS (0.38%)", x: -180, y: -179, end: true, line: "M-159 -179H-2V-134" },
              { text: "GET (99.58%)", x: 180, y: 179, line: "M2 134V179H159" },
            ]}
          />
          <Legend items={[["GET", "#4eb871"], ["OPTIONS", "#d4954f"], ["HEAD", "#b8a635"], ["POST", "#3546b8"], ["PUT", "#b84336"], ["DELETE", "#4fb836"]]} />
        </Panel>

        <Panel title="Request User Agent" className="col-span-14 h-[712px]">
          <Donut
            label="User agent share"
            outer={108}
            inner={78}
            gap={3}
            slices={[
              [54.8, "#3aa5b8"], [26.5, "#67b836"], [4.9, "#8135b5"], [5.1, "#b6379b"], [2.5, "#38b84f"],
              [2, "#b58d36"], [1.3, "#667fd4"], [1.2, "#355cb8"], [0.9, "#b8373d"], [0.8, "#39b6ae"],
            ]}
            callouts={[
              { text: "Mozilla/5.0 (Windows NT 10.0; Win64; x64)", x: 126, y: 18, line: "M93 15L106 18L123 19" },
              { text: "AppleWebKit/537.36 (KHTML, like Gecko) Version/7.0....", x: -124, y: 52, end: true, line: "M-113 51H-107L-85 40" },
              { text: "Android 8.0.0; Build/OPR6.170623.010) (4.78%)", x: -125, y: -66, end: true, line: "M-112 -67H-107L-80 -49" },
              { text: "AppleWebKit/537.36 (KHTML, like Gecko) Chrome/75.0.3770.10...", x: -124, y: -118, end: true, line: "M-104 -117H-41L-31 -88" },
            ]}
          />
          <ul className="grid grid-cols-[300px_1fr] px-14 text-[#5c6371]">
            {agentLegend.map((cell, i) => (
              <li key={i}>
                <ul className="flex gap-4">
                  {cell.map(([label, color]) => (
                    <LegendItem key={color} label={label} color={color} />
                  ))}
                </ul>
              </li>
            ))}
          </ul>
        </Panel>

        <Panel title="Cache Ratio" className="col-span-11 h-[712px]">
          <Donut
            label="Cache ratio share"
            outer={157}
            inner={112}
            slices={[[54.8, "#5b35b0"], [34.38, "#7fb638"], [4.91, "#b548b4"], [3.3, "#6b38b8"], [2.61, "#b83a6d"]]}
            callouts={[
              { text: "hit (54.8%)", x: 179, y: 27, line: "M134 20L161 27H177" },
              { text: "miss (34.38%)", x: -180, y: 33, end: true, line: "M-176 33H-161L-132 26" },
              { text: "expired (4.91%)", x: -180, y: -155, end: true, line: "M-159 -155H-90L-68 -117" },
            ]}
          />
          <Legend
            items={[
              ["hit", "#5b35b0"], ["miss", "#7fb638"], ["expired", "#b548b4"], ["unknown", "#6b38b8"],
              ["revalidated", "#b83a6d"], ["bypass", "#37b87e"], ["updating", "#b2b638"], ["stale", "#3b38b8"],
            ]}
          />
        </Panel>

        <Panel title="Request Protocol" className="col-span-11 h-[712px]">
          <Donut
            label="Request protocol share"
            outer={173}
            inner={123}
            slices={[[46.58, "#922c2c"], [44.75, "#b75f36"], [8.67, "#388db8"]]}
            callouts={[
              { text: "HTTP/1.1 (46.58%)", x: 197, y: -21, line: "M148 -16L178 -21H195" },
              { text: "HTTP/1.0 (44.75%)", x: -200, y: 73, end: true, line: "M-184 73H-180L-138 55" },
              { text: "HTTP/2 (8.67%)", x: -200, y: -190, end: true, line: "M-179 -190H-53L-40 -142" },
            ]}
          />
          <Legend items={[["HTTP/1.1", "#922c2c"], ["HTTP/1.0", "#b75f36"], ["HTTP/2", "#388db8"]]} />
        </Panel>
      </div>
    </main>
  );
}
